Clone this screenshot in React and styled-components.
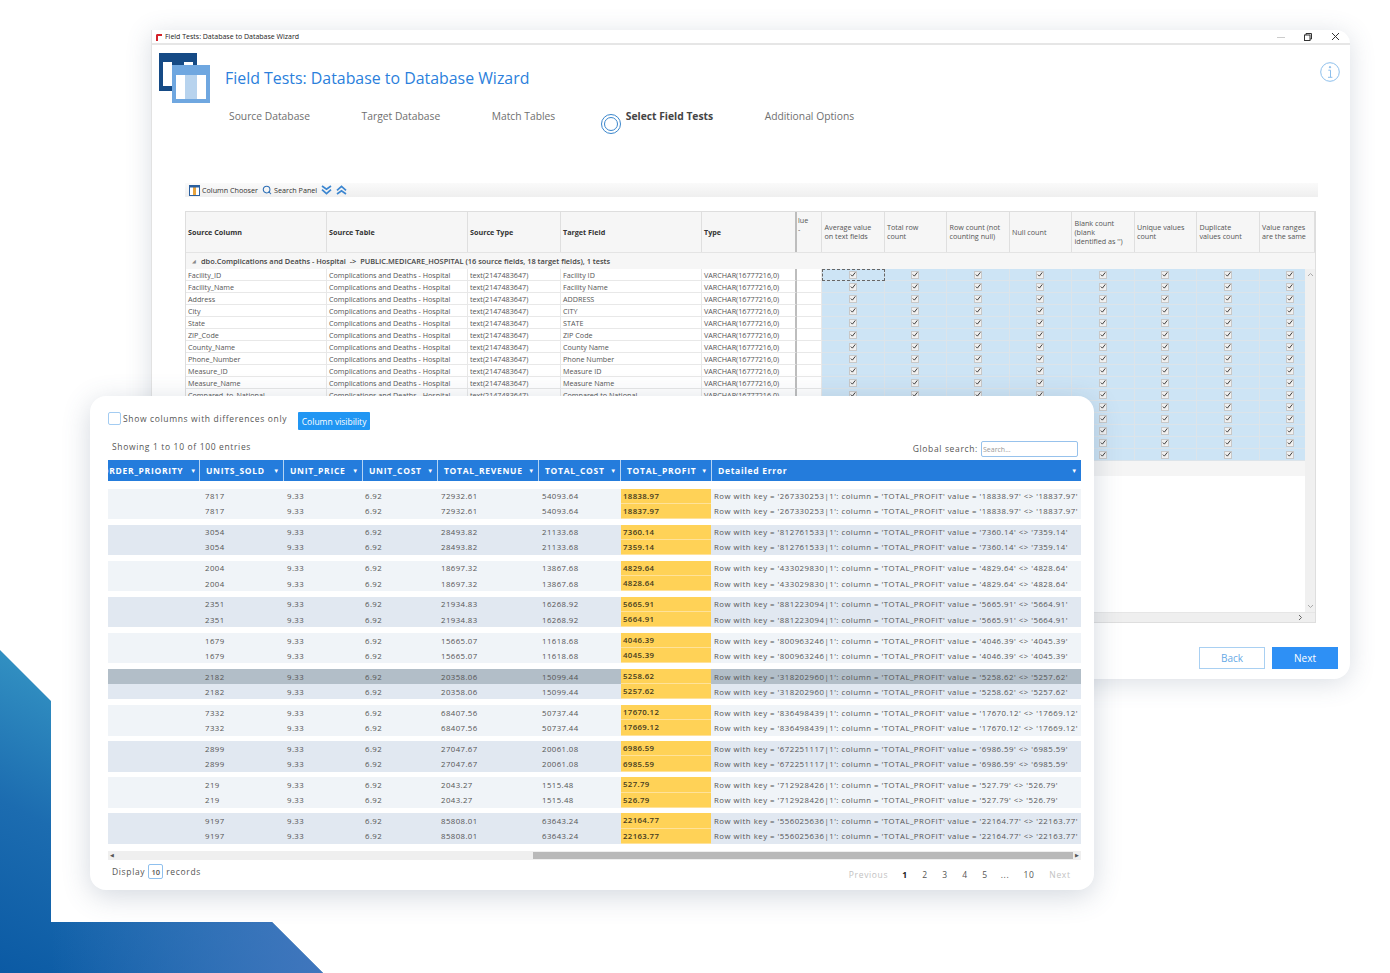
import React from 'react'
import styled, { createGlobalStyle } from 'styled-components'
import { Search } from 'lucide-react'

const GlobalStyle = createGlobalStyle`
  html, body {
    margin: 0;
    background: #fff;
  }
  * {
    box-sizing: border-box;
  }
`

const Page = styled.div`
  position: relative;
  width: 1390px;
  height: 973px;
  overflow: hidden;
  background: #fff;
  font-family: "Open Sans", "Liberation Sans", sans-serif;
`

const Corner = styled.div`
  position: absolute;
  left: 0;
  top: 650px;
  width: 323px;
  height: 323px;
  clip-path: polygon(0 0, 51px 51px, 51px 272px, 272px 272px, 323px 323px, 0 323px);
  background: linear-gradient(28deg, #0b5aa4 0%, #1c6cb0 35%, #3b9fc9 78%, #45acd0 100%);
  &::after {
    content: '';
    position: absolute;
    inset: 272px 0 0 51px;
    background: linear-gradient(90deg, rgba(64, 118, 189, 0) 0%, #4076bd 100%);
  }
`

/* back window */
const Wizard = styled.section`
  position: absolute;
  left: 151px;
  top: 30px;
  width: 1199px;
  height: 649px;
  background: #fff;
  border-left: 1px solid #e2e2e2;
  border-radius: 0 14px 16px 0;
  box-shadow: 0 4px 26px rgba(70, 90, 120, 0.2);
  display: flex;
  flex-direction: column;
`

const TitleBar = styled.header`
  height: 15px;
  display: flex;
  align-items: center;
  padding: 0 10px 0 3px;
  border-bottom: 2px solid #e6e6e6;
  font-size: 7px;
  color: #222;
  span {
    margin-left: 2px;
  }
`

const WinControls = styled.div`
  margin-left: auto;
  display: flex;
  align-items: center;
  gap: 19px;
`

const Head = styled.div`
  display: flex;
  align-items: flex-start;
  padding: 8px 10px 0 7px;
`

const Title = styled.h1`
  margin: 13px 0 0 15px;
  font-size: 15.9px;
  line-height: 24px;
  font-weight: 400;
  color: #2b7fdc;
`

const InfoButton = styled.div`
  margin: 9px 0 0 auto;
`

const Steps = styled.nav`
  display: flex;
  gap: 51.5px;
  padding-left: 77px;
  margin-top: 5px;
  height: 56px;
`

const Step = styled.div`
  display: flex;
  gap: 5px;
  font-size: 10.3px;
  line-height: 14px;
  color: ${p => (p.$on ? '#444' : '#6f6f6f')};
  font-weight: ${p => (p.$on ? 700 : 400)};
  margin-left: ${p => (p.$on ? '-6px' : '0')};
`

const StepDot = styled.i`
  display: block;
  width: 20px;
  height: 20px;
  margin-top: 5px;
  border: 4px double #3a86cc;
  border-radius: 50%;
`

const Toolbar = styled.div`
  display: flex;
  align-items: center;
  width: 1133px;
  height: 14px;
  margin: 18px 0 0 33px;
  padding-left: 4px;
  background: linear-gradient(#fafafa, #efefef);
  font-size: 7.2px;
  color: #333;
`

const ToolItem = styled.span`
  display: inline-flex;
  align-items: center;
  gap: 2px;
  margin-right: 4px;
`

const Grid = styled.div`
  width: 1131px;
  height: 412px;
  margin: 14px 0 0 33px;
  border: 1px solid #dedede;
  display: flex;
  flex-direction: column;
  font-size: 7.2px;
  color: #555;
`

const GridHead = styled.div`
  display: grid;
  grid-template-columns: 141px 141px 93px 141px 95px 25px repeat(7, 62.5px) 1fr;
  height: 41px;
  background: #f6f6f6;
  border-bottom: 1px solid #e4e4e4;
  flex: none;
`

const HeadCell = styled.div`
  display: flex;
  align-items: ${p => (p.$top ? 'flex-start' : 'center')};
  padding: ${p => (p.$top ? '4px 1px' : '0 2px')};
  border-right: ${p => (p.$thick ? '2px solid #bdbdbd' : '1px solid #dfdfdf')};
  font-weight: ${p => (p.$strong ? 700 : 400)};
  color: ${p => (p.$strong ? '#333' : '#555')};
  line-height: 9px;
  white-space: pre-line;
  overflow: hidden;
`

const TestHead = styled(HeadCell)`
  padding-left: 2.5px;
`

const GroupRow = styled.div`
  height: 16px;
  flex: none;
  display: flex;
  align-items: center;
  padding-left: 6px;
  gap: 5px;
  background: #f6f6f6;
  font-weight: 600;
  font-size: 7.4px;
  color: #444;
  white-space: pre;
  b {
    font-size: 5px;
    font-weight: 400;
    color: #888;
  }
`

const GridBody = styled.div`
  flex: 1;
  display: flex;
  min-height: 0;
`

const BodyMain = styled.div`
  flex: 1;
  min-width: 0;
  display: flex;
  flex-direction: column;
  overflow: hidden;
`

const DataRow = styled.div`
  display: grid;
  grid-template-columns: 141px 141px 93px 141px 95px 25px repeat(8, 62.5px);
  height: 12px;
  flex: none;
`

const DataCell = styled.div`
  display: flex;
  align-items: center;
  padding: 1px 0 0 2px;
  border-right: ${p => (p.$thick ? '2px solid #bdbdbd' : '1px solid #e8e8e8')};
  border-bottom: 1px solid #e8e8e8;
  white-space: nowrap;
  overflow: hidden;
  line-height: 10px;
`

const CheckCell = styled.div`
  display: flex;
  align-items: center;
  justify-content: center;
  background: #cde4f5;
  border-right: 1px solid #dce4ea;
  border-bottom: 1px solid #dce4ea;
  outline: ${p => (p.$focus ? '1px dashed #666' : 'none')};
  outline-offset: -1px;
`

const CheckBox = styled.span`
  width: 8px;
  height: 8px;
  background: #f0f0f0;
  border: 1px solid #c8c8c8;
  display: flex;
  align-items: center;
  justify-content: center;
`

const GridFoot = styled.div`
  height: 15px;
  flex: none;
  background: #f5f5f5;
`

const VScroll = styled.div`
  width: 10px;
  flex: none;
  background: #f0f0f0;
  display: flex;
  flex-direction: column;
  justify-content: space-between;
  align-items: center;
  padding: 3px 0;
`

const HScroll = styled.div`
  height: 10px;
  flex: none;
  background: #efefef;
  border-top: 1px solid #e6e6e6;
  display: flex;
  justify-content: flex-end;
  align-items: center;
  padding-right: 12px;
`

const Actions = styled.div`
  display: flex;
  justify-content: flex-end;
  gap: 7px;
  padding-right: 12px;
  margin-top: 24px;
`

const WizButton = styled.button`
  width: 66px;
  height: 22px;
  padding: 0;
  font: 400 10px "Open Sans", sans-serif;
  border: 1px solid ${p => (p.$primary ? '#2e90f5' : '#a9d0f2')};
  background: ${p => (p.$primary ? '#2e90f5' : '#fff')};
  color: ${p => (p.$primary ? '#fff' : '#66a9e6')};
`

/* front card */
const Card = styled.section`
  position: absolute;
  left: 90px;
  top: 396px;
  width: 1004px;
  height: 494px;
  padding: 16px 13px 0 18px;
  background: #fff;
  border-radius: 16px;
  box-shadow: 0 6px 28px rgba(70, 90, 120, 0.24);
  font-size: 8.5px;
  letter-spacing: 0.65px;
  color: #555;
`

const TopBar = styled.div`
  display: flex;
  align-items: flex-start;
  height: 18px;
`

const Tick = styled.span`
  width: 13px;
  height: 13px;
  border: 1px solid #a3ccf2;
  border-radius: 2px;
  flex: none;
`

const TickLabel = styled.span`
  margin-left: 2px;
  line-height: 13px;
`

const VisButton = styled.button`
  margin-left: 11px;
  width: 72px;
  height: 18px;
  padding: 0;
  border: none;
  border-radius: 1px;
  background: #2196f3;
  color: #fff;
  font: 400 8.5px "Open Sans", sans-serif;
`

const InfoRow = styled.div`
  display: flex;
  align-items: flex-start;
  justify-content: space-between;
  height: 16px;
  margin-top: 11px;
  padding: 0 3px 0 4px;
  line-height: 12px;
`

const SearchWrap = styled.label`
  display: flex;
  align-items: center;
  gap: 3px;
  height: 16px;
`

const SearchBox = styled.input`
  width: 97px;
  height: 16px;
  padding: 0 1px;
  border: 1px solid #97c2ec;
  border-radius: 2px;
  font: 400 7px "Open Sans", sans-serif;
  &::placeholder {
    color: #999;
  }
`

const TableHead = styled.div`
  display: grid;
  grid-template-columns: 92px 84px 79px 75px 101px 82px 91px 1fr;
  height: 21px;
  margin-top: 3px;
`

const Th = styled.div`
  display: flex;
  align-items: center;
  justify-content: ${p => (p.$clip ? 'flex-end' : 'space-between')};
  padding: ${p => (p.$clip ? '0 2px 0 0' : '0 3px 0 6px')};
  background: #247cdc;
  border-right: 1.5px solid #b5d4f3;
  color: #fff;
  font-size: 8.5px;
  font-weight: 700;
  letter-spacing: 0.7px;
  white-space: nowrap;
  overflow: hidden;
  i {
    font-style: normal;
    font-size: 6px;
    flex: none;
    margin-left: ${p => (p.$clip ? '7px' : '0')};
  }
  &:last-child {
    border-right: none;
  }
`

const Groups = styled.div`
  display: flex;
  flex-direction: column;
  gap: 5.6px;
  margin-top: 7.5px;
`

const Group = styled.div`
  background: ${p => (p.$alt ? '#e1e8f1' : '#f0f4f8')};
`

const Row = styled.div`
  display: grid;
  grid-template-columns: 92px 84px 79px 75px 101px 82px 91px 1fr;
  height: 15.25px;
  align-items: stretch;
  background: ${p => (p.$hi ? '#b2bec8' : 'transparent')};
`

const Td = styled.div`
  display: flex;
  align-items: center;
  padding-left: ${p => p.$pad ?? 3}px;
  white-space: nowrap;
  overflow: hidden;
  letter-spacing: 0.42px;
  font-size: 7.8px;
`

const Diff = styled(Td)`
  background: #ffd257;
  border-bottom: 1px solid #ffe29a;
  margin-right: 1px;
  color: #443a1e;
  font-weight: 600;
  letter-spacing: 0.36px;
`

const ErrorText = styled(Td)`
  letter-spacing: 0.5px;
`

const BarTrack = styled.div`
  display: flex;
  align-items: center;
  height: 9px;
  margin-top: 7px;
  padding: 0 2px;
  background: #efefef;
  color: #555;
  font-size: 5px;
  letter-spacing: 0;
`

const BarThumb = styled.div`
  width: 540px;
  height: 7px;
  margin-left: auto;
  margin-right: 2px;
  background: #b9b9b9;
`

const Footer = styled.div`
  display: flex;
  align-items: flex-start;
  justify-content: space-between;
  padding: 4px 4px 0 4px;
`

const Display = styled.div`
  display: flex;
  align-items: center;
  gap: 3px;
  height: 16px;
`

const SizeBox = styled.span`
  width: 15px;
  height: 15px;
  display: flex;
  align-items: center;
  justify-content: center;
  border: 1px solid #8fc0ee;
  border-radius: 2px;
  font-size: 7.5px;
  letter-spacing: 0;
  font-weight: 600;
`

const Pager = styled.div`
  display: flex;
  align-items: center;
  margin-top: 4px;
  height: 14px;
`

const PageLink = styled.span`
  width: ${p => p.$w || 20}px;
  text-align: center;
  color: ${p => (p.$off ? '#c2c2c2' : p.$on ? '#222' : '#555')};
  font-weight: ${p => (p.$on ? 700 : 400)};
`

const fields = [
  ['Facility_ID', 'Facility ID'],
  ['Facility_Name', 'Facility Name'],
  ['Address', 'ADDRESS'],
  ['City', 'CITY'],
  ['State', 'STATE'],
  ['ZIP_Code', 'ZIP Code'],
  ['County_Name', 'County Name'],
  ['Phone_Number', 'Phone Number'],
  ['Measure_ID', 'Measure ID'],
  ['Measure_Name', 'Measure Name'],
  ['Compared_to_National', 'Compared to National'],
  ['Denominator', 'Denominator'],
  ['Score', 'Score'],
  ['Lower_Estimate', 'Lower Estimate'],
  ['Higher_Estimate', 'Higher Estimate'],
  ['Footnote', 'Footnote'],
]

const tests = [
  'Average value\non text fields',
  'Total row\ncount',
  'Row count (not\ncounting null)',
  'Null count',
  "Blank count\n(blank\nidentified as '')",
  'Unique values\ncount',
  'Duplicate\nvalues count',
  'Value ranges\nare the same',
]

const records = [
  ['7817', '72932.61', '54093.64', '18838.97', '18837.97', '267330253'],
  ['3054', '28493.82', '21133.68', '7360.14', '7359.14', '812761533'],
  ['2004', '18697.32', '13867.68', '4829.64', '4828.64', '433029830'],
  ['2351', '21934.83', '16268.92', '5665.91', '5664.91', '881223094'],
  ['1679', '15665.07', '11618.68', '4046.39', '4045.39', '800963246'],
  ['2182', '20358.06', '15099.44', '5258.62', '5257.62', '318202960'],
  ['7332', '68407.56', '50737.44', '17670.12', '17669.12', '836498439'],
  ['2899', '27047.67', '20061.08', '6986.59', '6985.59', '672251117'],
  ['219', '2043.27', '1515.48', '527.79', '526.79', '712928426'],
  ['9197', '85808.01', '63643.24', '22164.77', '22163.77', '556025636'],
]

const tableColumns = ['UNITS_SOLD', 'UNIT_PRICE', 'UNIT_COST', 'TOTAL_REVENUE', 'TOTAL_COST', 'TOTAL_PROFIT']

function AppMark() {
  return (
    <svg width="8" height="8" viewBox="0 0 8 8">
      <path d="M1 8V2.5C1 1.5 1.6 1 2.5 1H7v2H3v5z" fill="#d3222a" />
    </svg>
  )
}

function WizardLogo() {
  return (
    <svg width="51" height="51" viewBox="0 0 51 51">
      <rect width="38" height="38" fill="#154a85" />
      <rect x="4" y="9" width="9" height="24" fill="#fff" />
      <rect x="25" y="9" width="9" height="3" fill="#fff" />
      <rect x="13" y="12" width="38" height="38" fill="#6fa7e0" />
      <rect x="17" y="22" width="9" height="24" fill="#fff" />
      <rect x="26" y="22" width="12" height="24" fill="#b7d3ee" />
      <rect x="38" y="22" width="9" height="24" fill="#fff" />
    </svg>
  )
}

function InfoIcon() {
  return (
    <svg width="20" height="20" viewBox="0 0 20 20" fill="none" stroke="#8dbfec">
      <circle cx="10" cy="10" r="9.3" />
      <circle cx="10" cy="5.2" r="0.7" fill="#8dbfec" />
      <path d="M8.3 8.2h2.2v7M8 15.3h4.4" />
    </svg>
  )
}

function ChooserIcon() {
  return (
    <svg width="11" height="11" viewBox="0 0 11 11">
      <rect width="11" height="11" fill="#2a5f9e" />
      <rect x="1" y="2.5" width="3" height="7.5" fill="#fff" />
      <rect x="4" y="2.5" width="3" height="7.5" fill="#e8a33c" />
      <rect x="7" y="2.5" width="3" height="7.5" fill="#fff" />
    </svg>
  )
}

function Chevrons({ up }) {
  return (
    <svg width="11" height="10" viewBox="0 0 11 10" fill="none" stroke="#3c86d0" strokeWidth="1.7" style={{ transform: up ? 'scaleY(-1)' : 'none' }}>
      <path d="M1 1 5.5 4.2 10 1" />
      <path d="M1 4.6 5.5 8.6 10 4.6" />
    </svg>
  )
}

function CheckMark() {
  return (
    <svg width="7" height="7" viewBox="0 0 7 7" fill="none" stroke="#333" strokeWidth="1.1">
      <path d="M1 3.6 2.8 5.4 6.2 1" />
    </svg>
  )
}

function FieldGrid() {
  return (
    <Grid>
      <GridHead>
        <HeadCell $strong>Source Column</HeadCell>
        <HeadCell $strong>Source Table</HeadCell>
        <HeadCell $strong>Source Type</HeadCell>
        <HeadCell $strong>Target Field</HeadCell>
        <HeadCell $strong $thick>Type</HeadCell>
        <HeadCell $top>{'lue\n-'}</HeadCell>
        {tests.map(t => (
          <TestHead key={t}>{t}</TestHead>
        ))}
      </GridHead>
      <GroupRow>
        <b>◢</b>
        {'dbo.Complications and Deaths - Hospital  ->  PUBLIC.MEDICARE_HOSPITAL (16 source fields, 18 target fields), 1 tests'}
      </GroupRow>
      <GridBody>
        <BodyMain>
          {fields.map(([source, target], r) => (
            <DataRow key={source}>
              <DataCell>{source}</DataCell>
              <DataCell>Complications and Deaths - Hospital</DataCell>
              <DataCell>text(2147483647)</DataCell>
              <DataCell>{target}</DataCell>
              <DataCell $thick>VARCHAR(16777216,0)</DataCell>
              <DataCell />
              {tests.map((t, c) => (
                <CheckCell key={t} $focus={r === 0 && c === 0}>
                  <CheckBox>
                    <CheckMark />
                  </CheckBox>
                </CheckCell>
              ))}
            </DataRow>
          ))}
          <GridFoot />
        </BodyMain>
        <VScroll>
          <svg width="7" height="5" viewBox="0 0 7 5" fill="none" stroke="#aaa"><path d="M1 4 3.5 1.5 6 4" /></svg>
          <svg width="7" height="5" viewBox="0 0 7 5" fill="none" stroke="#aaa"><path d="M1 1 3.5 3.5 6 1" /></svg>
        </VScroll>
      </GridBody>
      <HScroll>
        <svg width="5" height="7" viewBox="0 0 5 7" fill="none" stroke="#666"><path d="M1 1 3.5 3.5 1 6" /></svg>
      </HScroll>
    </Grid>
  )
}

function RecordRow({ rec, value, hi }) {
  const [units, revenue, cost, first, second, key] = rec
  return (
    <Row $hi={hi}>
      <Td />
      <Td $pad={5}>{units}</Td>
      <Td>9.33</Td>
      <Td $pad={2}>6.92</Td>
      <Td $pad={3}>{revenue}</Td>
      <Td $pad={3}>{cost}</Td>
      <Diff $pad={2}>{value}</Diff>
      <ErrorText $pad={2}>
        {`Row with key = '${key}|1': column = 'TOTAL_PROFIT' value = '${first}' <> '${second}'`}
      </ErrorText>
    </Row>
  )
}

export default function App() {
  return (
    <Page>
      <GlobalStyle />
      <Corner />

      <Wizard>
        <TitleBar>
          <AppMark />
          <span>Field Tests: Database to Database Wizard</span>
          <WinControls>
            <svg width="8" height="8" viewBox="0 0 8 8" stroke="#ccc"><path d="M0 4.5h8" /></svg>
            <svg width="8" height="8" viewBox="0 0 8 8" fill="none" stroke="#333"><rect x="0.5" y="2" width="5.5" height="5.5" /><path d="M2 2V.5h5.5V6H6" /></svg>
            <svg width="9" height="9" viewBox="0 0 9 9" stroke="#333"><path d="M1 1l7 7M8 1 1 8" /></svg>
          </WinControls>
        </TitleBar>
        <Head>
          <WizardLogo />
          <Title>Field Tests: Database to Database Wizard</Title>
          <InfoButton>
            <InfoIcon />
          </InfoButton>
        </Head>
        <Steps>
          <Step>Source Database</Step>
          <Step>Target Database</Step>
          <Step>Match Tables</Step>
          <Step $on>
            <StepDot />
            Select Field Tests
          </Step>
          <Step>Additional Options</Step>
        </Steps>
        <Toolbar>
          <ToolItem>
            <ChooserIcon />
            Column Chooser
          </ToolItem>
          <ToolItem>
            <Search size={10} color="#2a6db5" strokeWidth={2.5} />
            Search Panel
          </ToolItem>
          <ToolItem>
            <Chevrons />
          </ToolItem>
          <ToolItem>
            <Chevrons up />
          </ToolItem>
        </Toolbar>
        <FieldGrid />
        <Actions>
          <WizButton>Back</WizButton>
          <WizButton $primary>Next</WizButton>
        </Actions>
      </Wizard>

      <Card>
        <TopBar>
          <Tick />
          <TickLabel>Show columns with differences only</TickLabel>
          <VisButton>Column visibility</VisButton>
        </TopBar>
        <InfoRow>
          <span>Showing 1 to 10 of 100 entries</span>
          <SearchWrap>
            Global search:
            <SearchBox placeholder="Search..." />
          </SearchWrap>
        </InfoRow>
        <TableHead>
          <Th $clip>
            ORDER_PRIORITY<i>▼</i>
          </Th>
          {tableColumns.map(name => (
            <Th key={name}>
              {name}
              <i>▼</i>
            </Th>
          ))}
          <Th>
            Detailed Error<i>▼</i>
          </Th>
        </TableHead>
        <Groups>
          {records.map((rec, i) => (
            <Group key={rec[5]} $alt={i % 2 === 1}>
              <RecordRow rec={rec} value={rec[3]} hi={i === 5} />
              <RecordRow rec={rec} value={rec[4]} />
            </Group>
          ))}
        </Groups>
        <BarTrack>
          ◀
          <BarThumb />
          ▶
        </BarTrack>
        <Footer>
          <Display>
            Display <SizeBox>10</SizeBox> records
          </Display>
          <Pager>
            <PageLink $off $w={47}>Previous</PageLink>
            <PageLink $w={3} />
            <PageLink $on>1</PageLink>
            <PageLink>2</PageLink>
            <PageLink>3</PageLink>
            <PageLink>4</PageLink>
            <PageLink>5</PageLink>
            <PageLink>...</PageLink>
            <PageLink $w={28}>10</PageLink>
            <PageLink $off $w={34}>Next</PageLink>
          </Pager>
        </Footer>
      </Card>
    </Page>
  )
}
